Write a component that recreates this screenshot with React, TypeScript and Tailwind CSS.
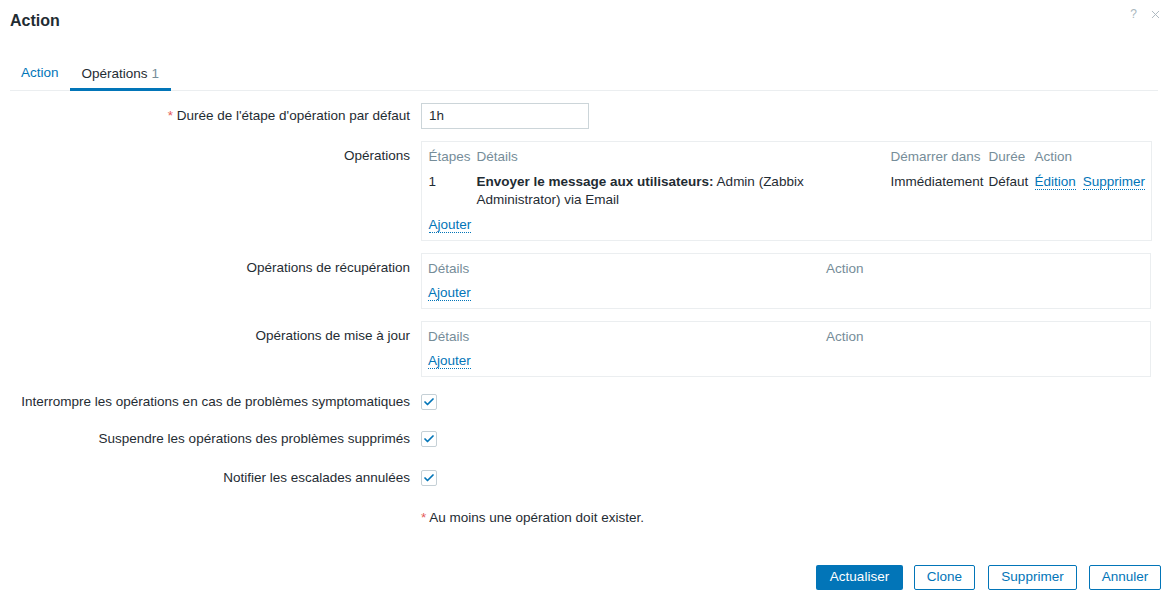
import { Check, X } from 'lucide-react';

const font = { fontFamily: '"Liberation Sans", Arial, sans-serif' };

function Link({ children }: { children: React.ReactNode }) {
  return (
    <span className="text-[#0275b8] border-b border-dotted border-[#0275b8] leading-[15px]">
      {children}
    </span>
  );
}

function Checkbox() {
  return (
    <div className="w-4 h-4 border border-[#c5d0d6] rounded-[2px] flex items-center justify-center bg-white">
      <Check className="w-3 h-3 text-[#0275b8]" strokeWidth={3.5} />
    </div>
  );
}

function Row({ label, required, children, top }: { label: string; required?: boolean; children: React.ReactNode; top?: boolean }) {
  return (
    <div className={`flex ${top ? 'items-start' : 'items-center'}`}>
      <div className={`w-[410px] shrink-0 text-right ${top ? 'pt-[6px]' : ''} leading-[18px] whitespace-nowrap`}>
        {required && <span className="text-[#e45959]">* </span>}
        {label}
      </div>
      <div className="ml-[11px] flex-1 pr-[17px]">{children}</div>
    </div>
  );
}

export default function App() {
  return (
    <div className="w-[1168px] h-[595px] bg-white relative text-[13.5px] text-[#1f2c33]" style={font}>
      {/* Header */}
      <div className="h-[42px] flex items-center pl-[10px]">
        <h1 className="text-[16px] font-bold text-[#1f2c33]">Action</h1>
      </div>
      <div className="absolute top-[5px] right-[6px] flex items-center gap-[12px] text-[#aab7be]">
        <span className="text-[12px]">?</span>
        <X className="w-[13px] h-[13px]" strokeWidth={1.75} />
      </div>

      {/* Tabs */}
      <div className="mx-[10px] mt-[15px] flex border-b border-[#ebeef0] h-[34px]">
        <div className="px-[11px] flex items-center text-[#0275b8]">Action</div>
        <div className="px-[12px] flex items-center border-b-[3px] border-[#0275b8] pt-[3px] mb-[-1px] text-[#1f2c33]">
          Opérations <span className="text-[#768d99] ml-[4px]">1</span>
        </div>
      </div>

      {/* Form */}
      <div className="mt-[12px] flex flex-col">
        <Row label="Durée de l'étape d'opération par défaut" required>
          <div className="w-[168px] h-[26px] border border-[#ccd5d9] flex items-center px-[7px]">1h</div>
        </Row>

        <div className="mt-[12px]">
          <Row label="Opérations" top>
            <div className="border border-[#ebeef0] pl-[6.5px] pr-[6px] pt-[6px] pb-[6px] leading-[18px]">
              <div className="grid grid-cols-[48px_414px_98px_46px_1fr] text-[#768d99]">
                <div>Étapes</div>
                <div>Détails</div>
                <div className="whitespace-nowrap">Démarrer dans</div>
                <div>Durée</div>
                <div>Action</div>
              </div>
              <div className="grid grid-cols-[48px_414px_98px_46px_1fr] mt-[7px]">
                <div>1</div>
                <div className="pr-[60px]">
                  <span className="font-bold">Envoyer le message aux utilisateurs:</span> Admin (Zabbix Administrator) via Email
                </div>
                <div>Immédiatement</div>
                <div>Défaut</div>
                <div className="whitespace-nowrap">
                  <Link>Édition</Link>
                  <span className="ml-[7px]">
                    <Link>Supprimer</Link>
                  </span>
                </div>
              </div>
              <div className="mt-[7px]">
                <Link>Ajouter</Link>
              </div>
            </div>
          </Row>
        </div>

        {['Opérations de récupération', 'Opérations de mise à jour'].map((l) => (
          <div className="mt-[12px]" key={l}>
            <Row label={l} top>
              <div className="border border-[#ebeef0] px-[6px] pt-[6px] pb-[6px] leading-[18px]">
                <div className="grid grid-cols-[398px_1fr] text-[#768d99]">
                  <div>Détails</div>
                  <div>Action</div>
                </div>
                <div className="mt-[6px]">
                  <Link>Ajouter</Link>
                </div>
              </div>
            </Row>
          </div>
        ))}

        <div className="mt-[16px] flex flex-col">
          <Row label="Interrompre les opérations en cas de problèmes symptomatiques">
            <Checkbox />
          </Row>
          <div className="mt-[19px]">
            <Row label="Suspendre les opérations des problèmes supprimés">
              <Checkbox />
            </Row>
          </div>
          <div className="mt-[21px]">
            <Row label="Notifier les escalades annulées">
              <Checkbox />
            </Row>
          </div>
        </div>

        <div className="mt-[22px] ml-[421px] leading-[18px]">
          <span className="text-[#e45959]">*</span> Au moins une opération doit exister.
        </div>
      </div>

      {/* Footer buttons */}
      <div className="absolute bottom-[5px] right-[7px] flex gap-[11px]">
        <button className="w-[87px] h-[25px] bg-[#0275b8] text-white rounded-[2px]">Actualiser</button>
        <button className="w-[61px] h-[25px] border border-[#0275b8] text-[#0275b8] rounded-[2px]">Clone</button>
        <button className="w-[89px] h-[25px] border border-[#0275b8] text-[#0275b8] rounded-[2px] ml-[2px]">Supprimer</button>
        <button className="w-[72px] h-[25px] border border-[#0275b8] text-[#0275b8] rounded-[2px] ml-[1px]">Annuler</button>
      </div>
    </div>
  );
}
